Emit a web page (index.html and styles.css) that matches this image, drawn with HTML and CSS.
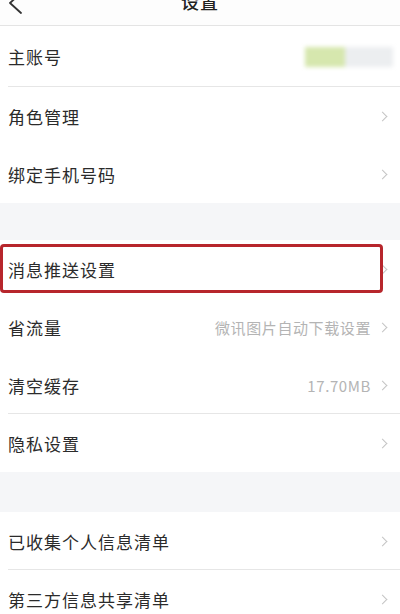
FILE: index.html
```html
<!DOCTYPE html>
<html lang="zh-CN">
<head>
<meta charset="utf-8">
<title>设置</title>
<link rel="stylesheet" href="styles.css">
</head>
<body>
<div class="page">
  <div class="header">
    <div class="header-inner">
      <div class="back">
        <svg width="16" height="28" viewBox="0 0 16 28"><path d="M14 4 L3 14 L14 24" fill="none" stroke="#333" stroke-width="1.8" stroke-linecap="round" stroke-linejoin="round"/></svg>
      </div>
      <div class="title">设置</div>
      <div class="spacer"></div>
    </div>
  </div>

  <div class="group">
    <div class="row first line">
      <span class="label">主账号</span>
      <span class="blur"><span class="blur-green"></span><span class="blur-gray"></span></span>
    </div>
    <div class="row">
      <span class="label">角色管理</span>
      <span class="chev"></span>
    </div>
    <div class="row">
      <span class="label">绑定手机号码</span>
      <span class="chev"></span>
    </div>
  </div>

  <div class="gap gap1"></div>

  <div class="group">
    <div class="row highlight">
      <span class="label">消息推送设置</span>
      <span class="chev"></span>
      <span class="redbox"></span>
    </div>
    <div class="row">
      <span class="label">省流量</span>
      <span class="right"><span class="value">微讯图片自动下载设置</span><span class="chev"></span></span>
    </div>
    <div class="row line">
      <span class="label">清空缓存</span>
      <span class="right"><span class="value">17.70MB</span><span class="chev"></span></span>
    </div>
    <div class="row">
      <span class="label">隐私设置</span>
      <span class="chev"></span>
    </div>
  </div>

  <div class="gap gap2"></div>

  <div class="group">
    <div class="row line">
      <span class="label">已收集个人信息清单</span>
      <span class="chev"></span>
    </div>
    <div class="row">
      <span class="label">第三方信息共享清单</span>
      <span class="chev"></span>
    </div>
  </div>
</div>
</body>
</html>
```
FILE: styles.css
```css
html, body {
  margin: 0;
  padding: 0;
  background: #ffffff;
}
body {
  width: 400px;
  height: 614px;
  overflow: hidden;
  font-family: "Noto Sans CJK SC", "Noto Sans", sans-serif;
  color: #2a2a2a;
}
.page {
  display: flex;
  flex-direction: column;
}
.header {
  height: 25px;
  overflow: hidden;
  border-bottom: 1px solid #e4e4e4;
  background: #fdfdfd;
}
.header-inner {
  margin-top: -21px;
  height: 44px;
  display: grid;
  grid-template-columns: 1fr auto 1fr;
  align-items: center;
}
.back {
  display: flex;
  align-items: center;
  box-sizing: border-box;
  height: 44px;
  padding-top: 4px;
  padding-left: 7px;
}
.title {
  font-size: 18px;
  font-weight: 500;
  color: #222;
  letter-spacing: 1px;
}
.group {
  display: flex;
  flex-direction: column;
  background: #fff;
}
.row {
  position: relative;
  height: 58px;
  display: flex;
  align-items: center;
  justify-content: space-between;
  padding: 0 10px 0 8px;
}
.row.first {
  height: 61px;
}
.row.line::after {
  content: "";
  position: absolute;
  left: 8px;
  right: 0;
  bottom: 0;
  height: 1px;
  background: #e6e6e6;
}
.label {
  font-size: 17px;
  letter-spacing: 1px;
  color: #2b2b2b;
}
.right {
  display: flex;
  align-items: center;
  gap: 8px;
}
.value {
  font-size: 15px;
  color: #b4b4b4;
  letter-spacing: 0.6px;
}
.chev {
  width: 6px;
  height: 6px;
  border-top: 1.5px solid #c4c4c4;
  border-right: 1.5px solid #c4c4c4;
  transform: rotate(45deg);
  margin-right: 4px;
}
.blur {
  display: flex;
  width: 88px;
  height: 20px;
  margin-right: -3px;
  filter: blur(2px);
}
.blur-green {
  width: 40px;
  background: #d6e7ae;
}
.blur-gray {
  flex: 1;
  background: #eceef0;
}
.gap {
  background: #f5f6f8;
}
.gap1 {
  height: 37px;
}
.gap2 {
  height: 40px;
}
.redbox {
  position: absolute;
  left: 0;
  top: 4px;
  width: 377px;
  height: 43px;
  border: 3px solid #b7262c;
  border-radius: 4px;
}
```
